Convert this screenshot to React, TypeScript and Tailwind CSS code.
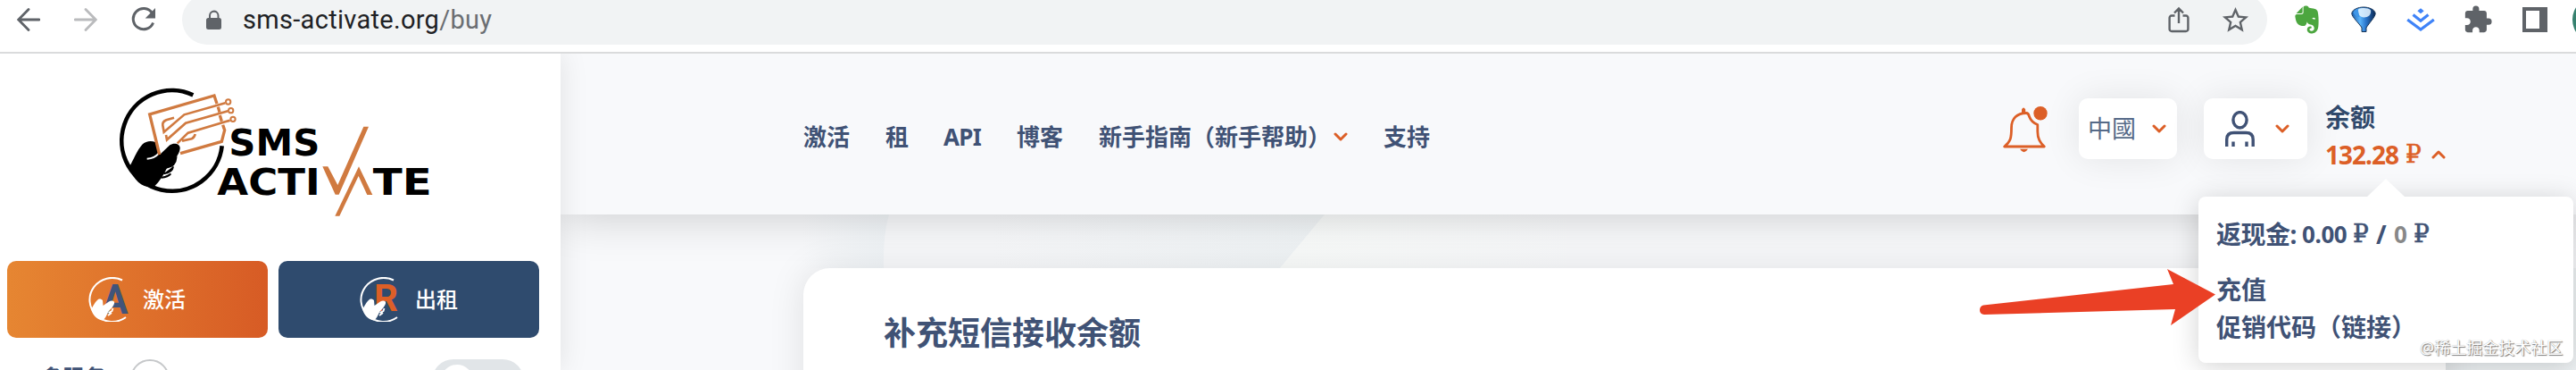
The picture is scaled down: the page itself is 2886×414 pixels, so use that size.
import React from "react";
import { MdExtension, MdStarBorder } from "react-icons/md";
import { SiEvernote } from "react-icons/si";

const sans = "font-['Noto_Sans','Noto_Sans_CJK_SC',sans-serif]";

function Chevron({ up = false, className = "" }: { up?: boolean; className?: string }) {
  return (
    <svg viewBox="0 0 16 10" className={`h-[10px] w-4 shrink-0 ${className}`} fill="none" stroke="#dc5f27" strokeWidth="3" strokeLinecap="round" strokeLinejoin="round">
      <path d={up ? "M2 8 8 2l6 6" : "M2 2l6 6 6-6"} />
    </svg>
  );
}

function Ruble({ className = "" }: { className?: string }) {
  return <span className={`font-['DejaVu_Serif',serif] text-[28px] font-normal [-webkit-text-stroke:0.5px_currentColor] ${className}`}>₽</span>;
}

function BrowserBar() {
  return (
    <div className="relative z-20 flex h-[60px] w-full shrink-0 items-start border-b-2 border-[#dadbdc] bg-white">
      <div className="flex h-11 w-[204px] shrink-0 items-center gap-[38px] pl-[19px]">
        <svg viewBox="0 0 26 26" className="size-[26px]" fill="none" stroke="#5f6368" strokeWidth="2.8" strokeLinecap="round">
          <path d="M25 13H2M13 1.5 1.7 13 13 24.500" />
        </svg>
        <svg viewBox="0 0 26 26" className="size-[26px]" fill="none" stroke="#babbbd" strokeWidth="2.8" strokeLinecap="round">
          <path d="M1 13h23M13 1.500 24.300 13 13 24.500" />
        </svg>
        <svg viewBox="0 0 28 28" className="size-7">
          <path d="M23.500 6.700A11.600 11.600 0 1 0 24.600 17.500" fill="none" stroke="#5f6368" strokeWidth="3" />
          <path d="M27 1v11.500H15.700z" fill="#5f6368" />
        </svg>
      </div>
      <div className="-mt-1.5 flex h-14 w-[2336px] shrink-0 items-center rounded-full bg-[#f1f3f4] pl-[22px] pr-[18px]">
        <svg viewBox="0 0 28 28" className="size-7" fill="#5f6368">
          <path d="M14 3.500a6 6 0 0 0-6 6V12H7.500A2.500 2.500 0 0 0 5 14.500v8A2.500 2.500 0 0 0 7.500 25h12a2.500 2.500 0 0 0 2.500-2.500v-8A2.500 2.500 0 0 0 19.500 12V9.500a6 6 0 0 0-5.500-6zM10 12V9.500a3.700 3.700 0 0 1 7.500 0V12z" />
        </svg>
        <span className="ml-[18px] mt-px font-[Roboto,sans-serif] text-[29px] leading-none tracking-[0.3px] text-[#202124]">
          sms-activate.org<span className="text-[#6b6e72]">/buy</span>
        </span>
        <svg viewBox="0 0 24 30" className="ml-auto h-[30px] w-6" fill="none" stroke="#5f6368" strokeWidth="2.400">
          <path d="M7.500 10.500H4A2.400 2.400 0 0 0 1.600 13v12.500A2.400 2.400 0 0 0 4 28h16a2.400 2.400 0 0 0 2.400-2.500V13A2.400 2.400 0 0 0 20 10.500h-3.500M12 19V3M7 7.500l5-5 5 5" />
        </svg>
        <MdStarBorder className="ml-[34px] size-[35px] text-[#5f6368]" />
      </div>
      <div className="flex h-11 flex-1 items-center overflow-hidden pl-[29px]">
        <SiEvernote className="h-8 w-[31px] shrink-0 text-[#4ca63f]" />
        <svg viewBox="0 0 28 30" className="ml-[34px] h-[30px] w-7 shrink-0">
          <defs>
            <linearGradient id="balloon" x1="0" y1="0" x2="1" y2="0">
              <stop offset="0" stopColor="#1c5fb0" />
              <stop offset=".35" stopColor="#5bb4fa" />
              <stop offset=".6" stopColor="#2a76cc" />
              <stop offset="1" stopColor="#0a2752" />
            </linearGradient>
          </defs>
          <path d="M.8 8C1.500 3.500 8 1 14 1s12.500 2.500 13.200 7c0 4-7.200 11-10.200 16v4.500h-5V24C9 19 .8 12 .8 8z" fill="url(#balloon)" stroke="#173456" strokeWidth="1" />
          <path d="M8 3.500C12 1.500 19 1.500 22 4.500c1 5-3 8-7.500 8S7 9 8 3.500z" fill="#e8f6ff" opacity=".85" />
          <path d="M2.500 6.500C4 4 6 3 7.500 3l2 9C6.500 12 3.500 10 2.500 6.500z" fill="#3f97e8" />
        </svg>
        <svg viewBox="0 0 32 26" className="ml-[34px] h-[26px] w-8 shrink-0" fill="none" stroke="#3f83f8" strokeWidth="3.200">
          <path d="M1.200 13 16 24l14.800-11M7.500 7.500l8.500 6.700 8.500-6.700" />
          <path d="M16 .3 19.700 3.200 16 6.200l-3.700-3z" fill="#3f83f8" stroke="none" />
        </svg>
        <MdExtension className="ml-[31px] size-[34px] shrink-0 text-[#5f6368]" />
        <div className="ml-[33px] h-7 w-7 shrink-0 border-y-4 border-l-4 border-r-[9px] border-[#5f6368] bg-white" />
        <div className="ml-7 size-[52px] shrink-0 rounded-full bg-[#36816f]" />
      </div>
    </div>
  );
}

function Logo() {
  return (
    <svg viewBox="0 0 1140 510" className="h-[170px] w-[380px]">
      <path d="M289 64A169 169 0 1 0 386 235" fill="none" stroke="#000" strokeWidth="14" />
      <path d="M74 306c15-25 26-56 44-76 12-12 30-14 44-8l15 42 34-32c12-9 36-6 34 12-2 22-25 45-43 63-10 22-25 47-45 66-38 4-66-20-83-67z" fill="#000" />
      <path d="M134 278c18-1 32-9 40-19" fill="none" stroke="#fff" strokeWidth="6" />
      <path d="M232 274c-1 22-14 31-34 34 8-16 18-28 34-34zM222 304c-2 15-17 22-32 24M214 328c-8 10-18 12-32 13" fill="#000" stroke="#000" strokeWidth="6" />
      <g fill="none" stroke="#d07a40" strokeWidth="8">
        <path d="M176 264 143 129 360 66l9 27M373 104l5 18M379 132l6 20M389 164l6 18-10 38-139 40" strokeWidth="10" />
        <path d="M225 140l-26 8q-14 6-12 18l4 22 68-58 138-39" />
        <path d="M198 198l3 16 63-56 142-40" />
        <path d="M236 226l36-35 141-42M252 218l32-7q10-5 12-16" />
        <circle cx="407" cy="87" r="8" strokeWidth="6" />
        <circle cx="416" cy="116" r="8" strokeWidth="6" />
        <circle cx="423" cy="145" r="8" strokeWidth="6" />
      </g>
      <g fill="#000" fontFamily="'DejaVu Sans'" fontWeight="700" fontSize="121">
        <text x="409" y="266" textLength="306" lengthAdjust="spacingAndGlyphs">SMS</text>
        <text x="370" y="398" textLength="346" lengthAdjust="spacingAndGlyphs">ACTI</text>
        <text x="893" y="398" textLength="198" lengthAdjust="spacingAndGlyphs">TE</text>
      </g>
      <path d="M724 304h18l33 62 87-196h17L779 398h-12zM766 470l80-166 46 95h-18l-29-63-64 134z" fill="#d07a40" />
    </svg>
  );
}

function HandBadge({ letter, color }: { letter: string; color: string }) {
  const isA = letter === "A";
  return (
    <svg viewBox="0 0 46 50" className="-ml-0.5 h-[50px] w-[46px] shrink-0">
      <path d="M39 3.500A25.300 24.500 0 1 0 43 45" fill="none" stroke="#fff" strokeWidth="2" />
      <text x={isA ? 16.5 : 17} y={isA ? 41 : 38} fontFamily="Roboto" fontWeight="700" fontSize={isA ? 47 : 42} textLength={isA ? 29 : 27} lengthAdjust="spacingAndGlyphs" fill={color}>
        {letter}
      </text>
      <path d="M4 36c3-4 4-8 8-11 2-1 4 0 5 1l.5 6L24 27.500c3-2 7-1 6 2-1 4-5 7-7 10-2 4-3 7-6 9-7-1-11-6-13-12.500z" fill="#fff" />
      <path d="M28.500 35l-1 3-4 2M27 40l-4 3" fill="none" stroke="#fff" strokeWidth="1.800" />
    </svg>
  );
}

function Sidebar() {
  return (
    <aside className="relative z-10 h-[354px] w-[628px] shrink-0 bg-white shadow-[0_0_30px_rgba(0,0,0,0.1)]">
      <div className="pl-[120px] pt-[25px]">
        <Logo />
      </div>
      <div className={`mt-[37px] flex gap-3 pl-2 text-2xl font-medium text-white ${sans}`}>
        <button className="flex h-[86px] w-[292px] items-center rounded-[10px] bg-linear-to-r from-[#e68632] to-[#d75b25] pl-[92px]">
          <HandBadge letter="A" color="#41547a" />
          <span className="ml-4">激活</span>
        </button>
        <button className="flex h-[86px] w-[292px] items-center rounded-[10px] bg-[#2f4b6e] pl-[92px]">
          <HandBadge letter="R" color="#dc5f27" />
          <span className="ml-[17px]">出租</span>
        </button>
      </div>
      <div className={`flex h-9 items-start overflow-hidden pl-[46px] pt-6 ${sans}`}>
        <span className="mt-[6px] w-[100px] text-2xl leading-7 font-bold text-[#405275]">多服务</span>
        <span className="size-11 rounded-full border-2 border-[#c6c8ca]" />
        <span className="ml-[294px] h-12 w-[103px] rounded-full bg-[#e1e5e8] px-2.5 py-1.5">
          <span className="block size-9 rounded-full bg-white" />
        </span>
      </div>
    </aside>
  );
}

function Header() {
  return (
    <header className={`relative z-[5] flex h-[180px] shrink-0 items-start bg-[#f8f9fb] pl-[272px] shadow-[0_0_50px_rgba(0,0,0,0.2)] ${sans}`}>
      <nav className="flex w-[1344px] shrink-0 items-center pt-[73px] text-[26px] leading-10 font-bold whitespace-nowrap text-[#405275]">
        <span>激活</span>
        <span className="ml-10">租</span>
        <span className="ml-[39px] w-[42px] tracking-[-0.7px]">API</span>
        <span className="ml-10">博客</span>
        <span className="ml-10">新手指南（新手帮助）</span>
        <Chevron className="ml-[3px]" />
        <span className="ml-10">支持</span>
      </nav>
      <svg viewBox="0 0 50 52" className="mt-[59px] h-[52px] w-[50px] shrink-0">
        <path d="M1.700 45h44.600c-5-5-7.500-9-7.500-17v-7.500q-6.800-2.500-9.300-9-.8-4-3.500-4c-10 0-16.500 6-16.500 16.500 0 12-1 15-7.800 21z" fill="none" stroke="#dc5f27" strokeWidth="2.800" strokeLinejoin="round" />
        <path d="M21 7V3.500q2-4 4.200 0V7zM19 47.800h9q-4.500 7-9 0z" fill="#dc5f27" />
        <circle cx="42" cy="7.700" r="7.700" fill="#dc5f27" />
      </svg>
      <div className="mt-[50px] ml-[35px] flex h-[68px] w-[110px] shrink-0 items-center rounded-[10px] bg-white pl-[10px] text-[27px] text-[#566a88] shadow-[0_0_40px_rgba(0,0,0,0.09)]">
        中國
        <Chevron className="ml-[18px]" />
      </div>
      <div className="mt-[50px] ml-[30px] flex h-[68px] w-[116px] shrink-0 items-center rounded-[10px] bg-white pl-6 shadow-[0_0_40px_rgba(0,0,0,0.09)]">
        <svg viewBox="0 0 34 40" className="h-10 w-[34px]" fill="none" stroke="#405275" strokeWidth="3.400">
          <ellipse cx="16.500" cy="10.300" rx="7.600" ry="8.700" />
          <path d="M1.700 40V32q0-7.500 8-7.500h13.500q8 0 8 7.500v8M9 34.500V40M24 34.500V40" />
        </svg>
        <Chevron className="ml-[22px]" />
      </div>
      <div className="mt-[50px] ml-5 w-[160px] shrink-0 font-bold whitespace-nowrap">
        <div className="text-[28px] leading-[42px] text-[#30496b]">余额</div>
        <div className="flex items-center text-[28px] leading-[42px] text-[#dc5f27]">
          <span className="w-[90px] tracking-[-1px]">132.28</span>
          <Ruble className="w-[19px]" />
          <Chevron up className="ml-[10px]" />
        </div>
      </div>
    </header>
  );
}

function BalanceMenu() {
  return (
    <div className={`absolute top-[220px] left-[2463px] z-20 h-[186px] w-[420px] rounded-lg bg-white pt-[21px] pl-5 text-[28px] leading-[42px] font-bold text-[#405275] shadow-[0_4px_30px_rgba(0,0,0,0.18)] ${sans}`}>
      <svg viewBox="0 0 42 20" className="absolute -top-5 left-[189px] h-5 w-[42px]">
        <path d="M0 20 21 0l21 20z" fill="#fff" />
      </svg>
      <div className="flex h-[42px] items-center whitespace-nowrap">
        <span className="w-[96px] tracking-[-0.5px]">返现金:</span>
        <span className="w-[57px] text-[26px] tracking-[-0.4px]">0.00</span>
        <Ruble className="w-[26px]" />
        <span className="w-5">/</span>
        <span className="w-[22px] text-[26px] text-[#888]">0</span>
        <Ruble />
      </div>
      <div className="mt-5">充值</div>
      <div>促销代码（链接）</div>
    </div>
  );
}

export default function App() {
  return (
    <div className="relative flex h-[414px] w-[2886px] flex-col overflow-hidden bg-[#f8f9fb]">
      <BrowserBar />
      <div className="flex h-[354px]">
        <Sidebar />
        <div className="flex h-[354px] flex-1 flex-col">
          <Header />
          <main className="relative flex h-[174px] overflow-hidden pt-[60px] pl-[272px]">
            <svg viewBox="0 0 2258 174" className="absolute inset-0 h-[174px] w-[2258px]">
              <defs>
                <linearGradient id="sweepA">
                  <stop offset="0" stopColor="#f0f4f7" stopOpacity="0" />
                  <stop offset="1" stopColor="#f0f4f7" />
                </linearGradient>
                <linearGradient id="sweepB">
                  <stop offset="0" stopColor="#f0f4f6" stopOpacity="0" />
                  <stop offset="1" stopColor="#f0f4f6" />
                </linearGradient>
                <linearGradient id="sweepC">
                  <stop offset="0" stopColor="#fafcfb" />
                  <stop offset="1" stopColor="#fafcfb" stopOpacity="0" />
                </linearGradient>
              </defs>
              <path d="M270 0h98q-7 25-6 60H270z" fill="url(#sweepA)" />
              <path d="M480 0h376L806 60H480z" fill="url(#sweepB)" />
              <path d="M856 0h300v60H806z" fill="url(#sweepC)" />
              <path d="M2112 60h146v114h-146z" fill="#eef2f4" />
            </svg>
            <section className={`relative h-[200px] w-[1840px] shrink-0 rounded-t-[30px] bg-white pt-[46px] pl-[90px] shadow-[0_0_40px_rgba(0,0,0,0.1)] ${sans}`}>
              <h1 className="text-[36px] leading-[54px] font-bold text-[#405275]">补充短信接收余额</h1>
            </section>
          </main>
        </div>
      </div>
      <BalanceMenu />
      <svg viewBox="0 0 266 66" className="absolute top-[300px] left-[2217px] z-30 h-[66px] w-[266px]">
        <path d="M5 41.500 218 18 211 1l54 28.500L215 64l5-18L6 52Q1 51.500 1 47t4-5.500z" fill="#ea4025" />
      </svg>
      <div className={`absolute top-[376px] left-[2711px] z-30 text-[18px] leading-[27px] whitespace-nowrap text-white [text-shadow:1px_1px_1px_#777,0_0_1px_#999] ${sans}`}>@稀土掘金技术社区</div>
    </div>
  );
}
